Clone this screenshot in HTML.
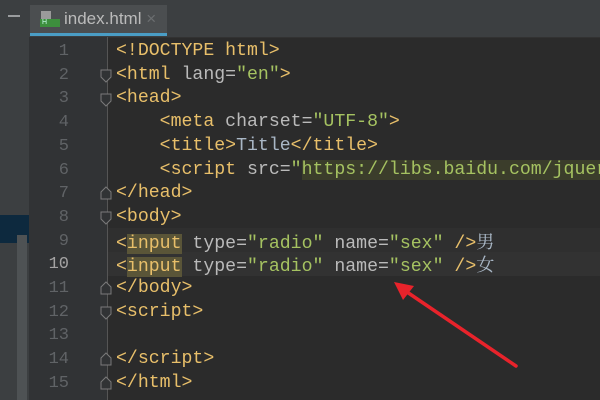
<!DOCTYPE html>
<html><head><meta charset="utf-8"><style>
body{margin:0;width:600px;height:400px;background:#2b2b2b;position:relative;overflow:hidden;font-family:"Liberation Mono","Noto Sans CJK SC",monospace}
.side{position:absolute;left:0;top:0;width:29px;height:400px;background:#3c3f41}
.tabbar{position:absolute;left:29px;top:0;width:571px;height:37px;background:#3c3f41;border-bottom:1px solid #323232}
.tab{position:absolute;left:30px;top:5px;width:137px;height:28px;background:#4b4e50;border-bottom:3px solid #4a9dc5}
.tab span{position:absolute;left:34px;top:4px;font:17px "Liberation Sans",sans-serif;color:#bbbbbb}
.gut{position:absolute;left:29px;top:37px;width:79px;height:363px;background:#313335}
.row{position:absolute;left:0;height:23.7px;line-height:23.7px;font-size:18.2px;white-space:pre}
.ln{position:absolute;left:29px;width:40px;text-align:right;color:#606366;font-size:17px}
.code{left:116px;color:#a9b7c6}
.t{color:#e8bf6a}.a{color:#bababa}.s{color:#a5c261}.cn{color:#a9b7c6;font-family:"Noto Serif CJK SC",serif}
.hl{background:#5a5538}
</style></head><body>
<div class="side"></div>
<div style="position:absolute;left:8px;top:15px;width:12px;height:2px;background:#9a9c9e"></div>
<div style="position:absolute;left:0;top:215px;width:29px;height:28px;background:#0d293e"></div>
<div style="position:absolute;left:17px;top:235px;width:10px;height:165px;background:#4e5254"></div>
<div class="tabbar"></div>
<div class="tab"><div style="position:absolute;left:11px;top:6px;width:10px;height:8px;background:#9a9a9a"></div><div style="position:absolute;left:10px;top:14px;width:18px;height:8px;background:#3d8f3d;color:#cfe;font:7px 'Liberation Sans';line-height:8px;padding-left:2px">H</div><span>index.html <span style="position:static;color:#6b6e70">×</span></span></div>
<div class="gut"></div>
<div style="position:absolute;left:107px;top:37px;width:1px;height:363px;background:#555"></div>
<div style="position:absolute;left:108px;top:252px;width:492px;height:24px;background:#323232"></div>
<div style="position:absolute;left:108px;top:228px;width:492px;height:24px;background:#2f2f2f"></div>

<div class="row ln" style="top:40px">1</div>
<div class="row ln" style="top:63.7px">2</div>
<div class="row ln" style="top:87.4px">3</div>
<div class="row ln" style="top:111.1px">4</div>
<div class="row ln" style="top:134.8px">5</div>
<div class="row ln" style="top:158.5px">6</div>
<div class="row ln" style="top:182.2px">7</div>
<div class="row ln" style="top:205.9px">8</div>
<div class="row ln" style="top:229.6px">9</div>
<div class="row ln" style="top:253.3px;color:#a4a3a3">10</div>
<div class="row ln" style="top:277px">11</div>
<div class="row ln" style="top:300.7px">12</div>
<div class="row ln" style="top:324.4px">13</div>
<div class="row ln" style="top:348.1px">14</div>
<div class="row ln" style="top:371.8px">15</div>

<div class="row code" style="top:40px"><span class="t">&lt;!DOCTYPE html&gt;</span></div>
<div class="row code" style="top:63.7px"><span class="t">&lt;html </span><span class="a">lang=</span><span class="s">"en"</span><span class="t">&gt;</span></div>
<div class="row code" style="top:87.4px"><span class="t">&lt;head&gt;</span></div>
<div class="row code" style="top:111.1px">    <span class="t">&lt;meta </span><span class="a">charset=</span><span class="s">"UTF-8"</span><span class="t">&gt;</span></div>
<div class="row code" style="top:134.8px">    <span class="t">&lt;title&gt;</span>Title<span class="t">&lt;/title&gt;</span></div>
<div class="row code" style="top:158.5px">    <span class="t">&lt;script </span><span class="a">src=</span><span class="s">"<span style="background:#3b3d2b">https://libs.baidu.com/jquery</span></span></div>
<div class="row code" style="top:182.2px"><span class="t">&lt;/head&gt;</span></div>
<div class="row code" style="top:205.9px"><span class="t">&lt;body&gt;</span></div>
<div class="row code" style="top:229.6px"><span class="t">&lt;<span class="hl">input</span> </span><span class="a">type=</span><span class="s">"radio" </span><span class="a">name=</span><span class="s">"sex" </span><span class="t">/&gt;</span><span class="cn">男</span></div>
<div class="row code" style="top:253.3px"><span class="t">&lt;<span class="hl">input</span> </span><span class="a">type=</span><span class="s">"radio" </span><span class="a">name=</span><span class="s">"sex" </span><span class="t">/&gt;</span><span class="cn">女</span></div>
<div class="row code" style="top:277px"><span class="t">&lt;/body&gt;</span></div>
<div class="row code" style="top:300.7px"><span class="t">&lt;script&gt;</span></div>
<div class="row code" style="top:348.1px"><span class="t">&lt;/script&gt;</span></div>
<div class="row code" style="top:371.8px"><span class="t">&lt;/html&gt;</span></div>

<svg width="600" height="400" style="position:absolute;left:0;top:0">
<g fill="#313335" stroke="#7a7a7a" stroke-width="1">
<path d="M101 70h10v7l-5 5-5-5z"/><path d="M101 94h10v7l-5 5-5-5z"/>
<path d="M101 212h10v7l-5 5-5-5z"/><path d="M101 307h10v7l-5 5-5-5z"/>
<path d="M101 199h10v-7l-5-5-5 5z"/><path d="M101 294h10v-7l-5-5-5 5z"/>
<path d="M101 365h10v-7l-5-5-5 5z"/><path d="M101 389h10v-7l-5-5-5 5z"/>
</g>
<line x1="516" y1="366" x2="404" y2="290" stroke="#e8232b" stroke-width="3.5" stroke-linecap="round"/>
<path d="M394 282 L414 286 L403 300 Z" fill="#e8232b"/>
</svg>
</body></html>
